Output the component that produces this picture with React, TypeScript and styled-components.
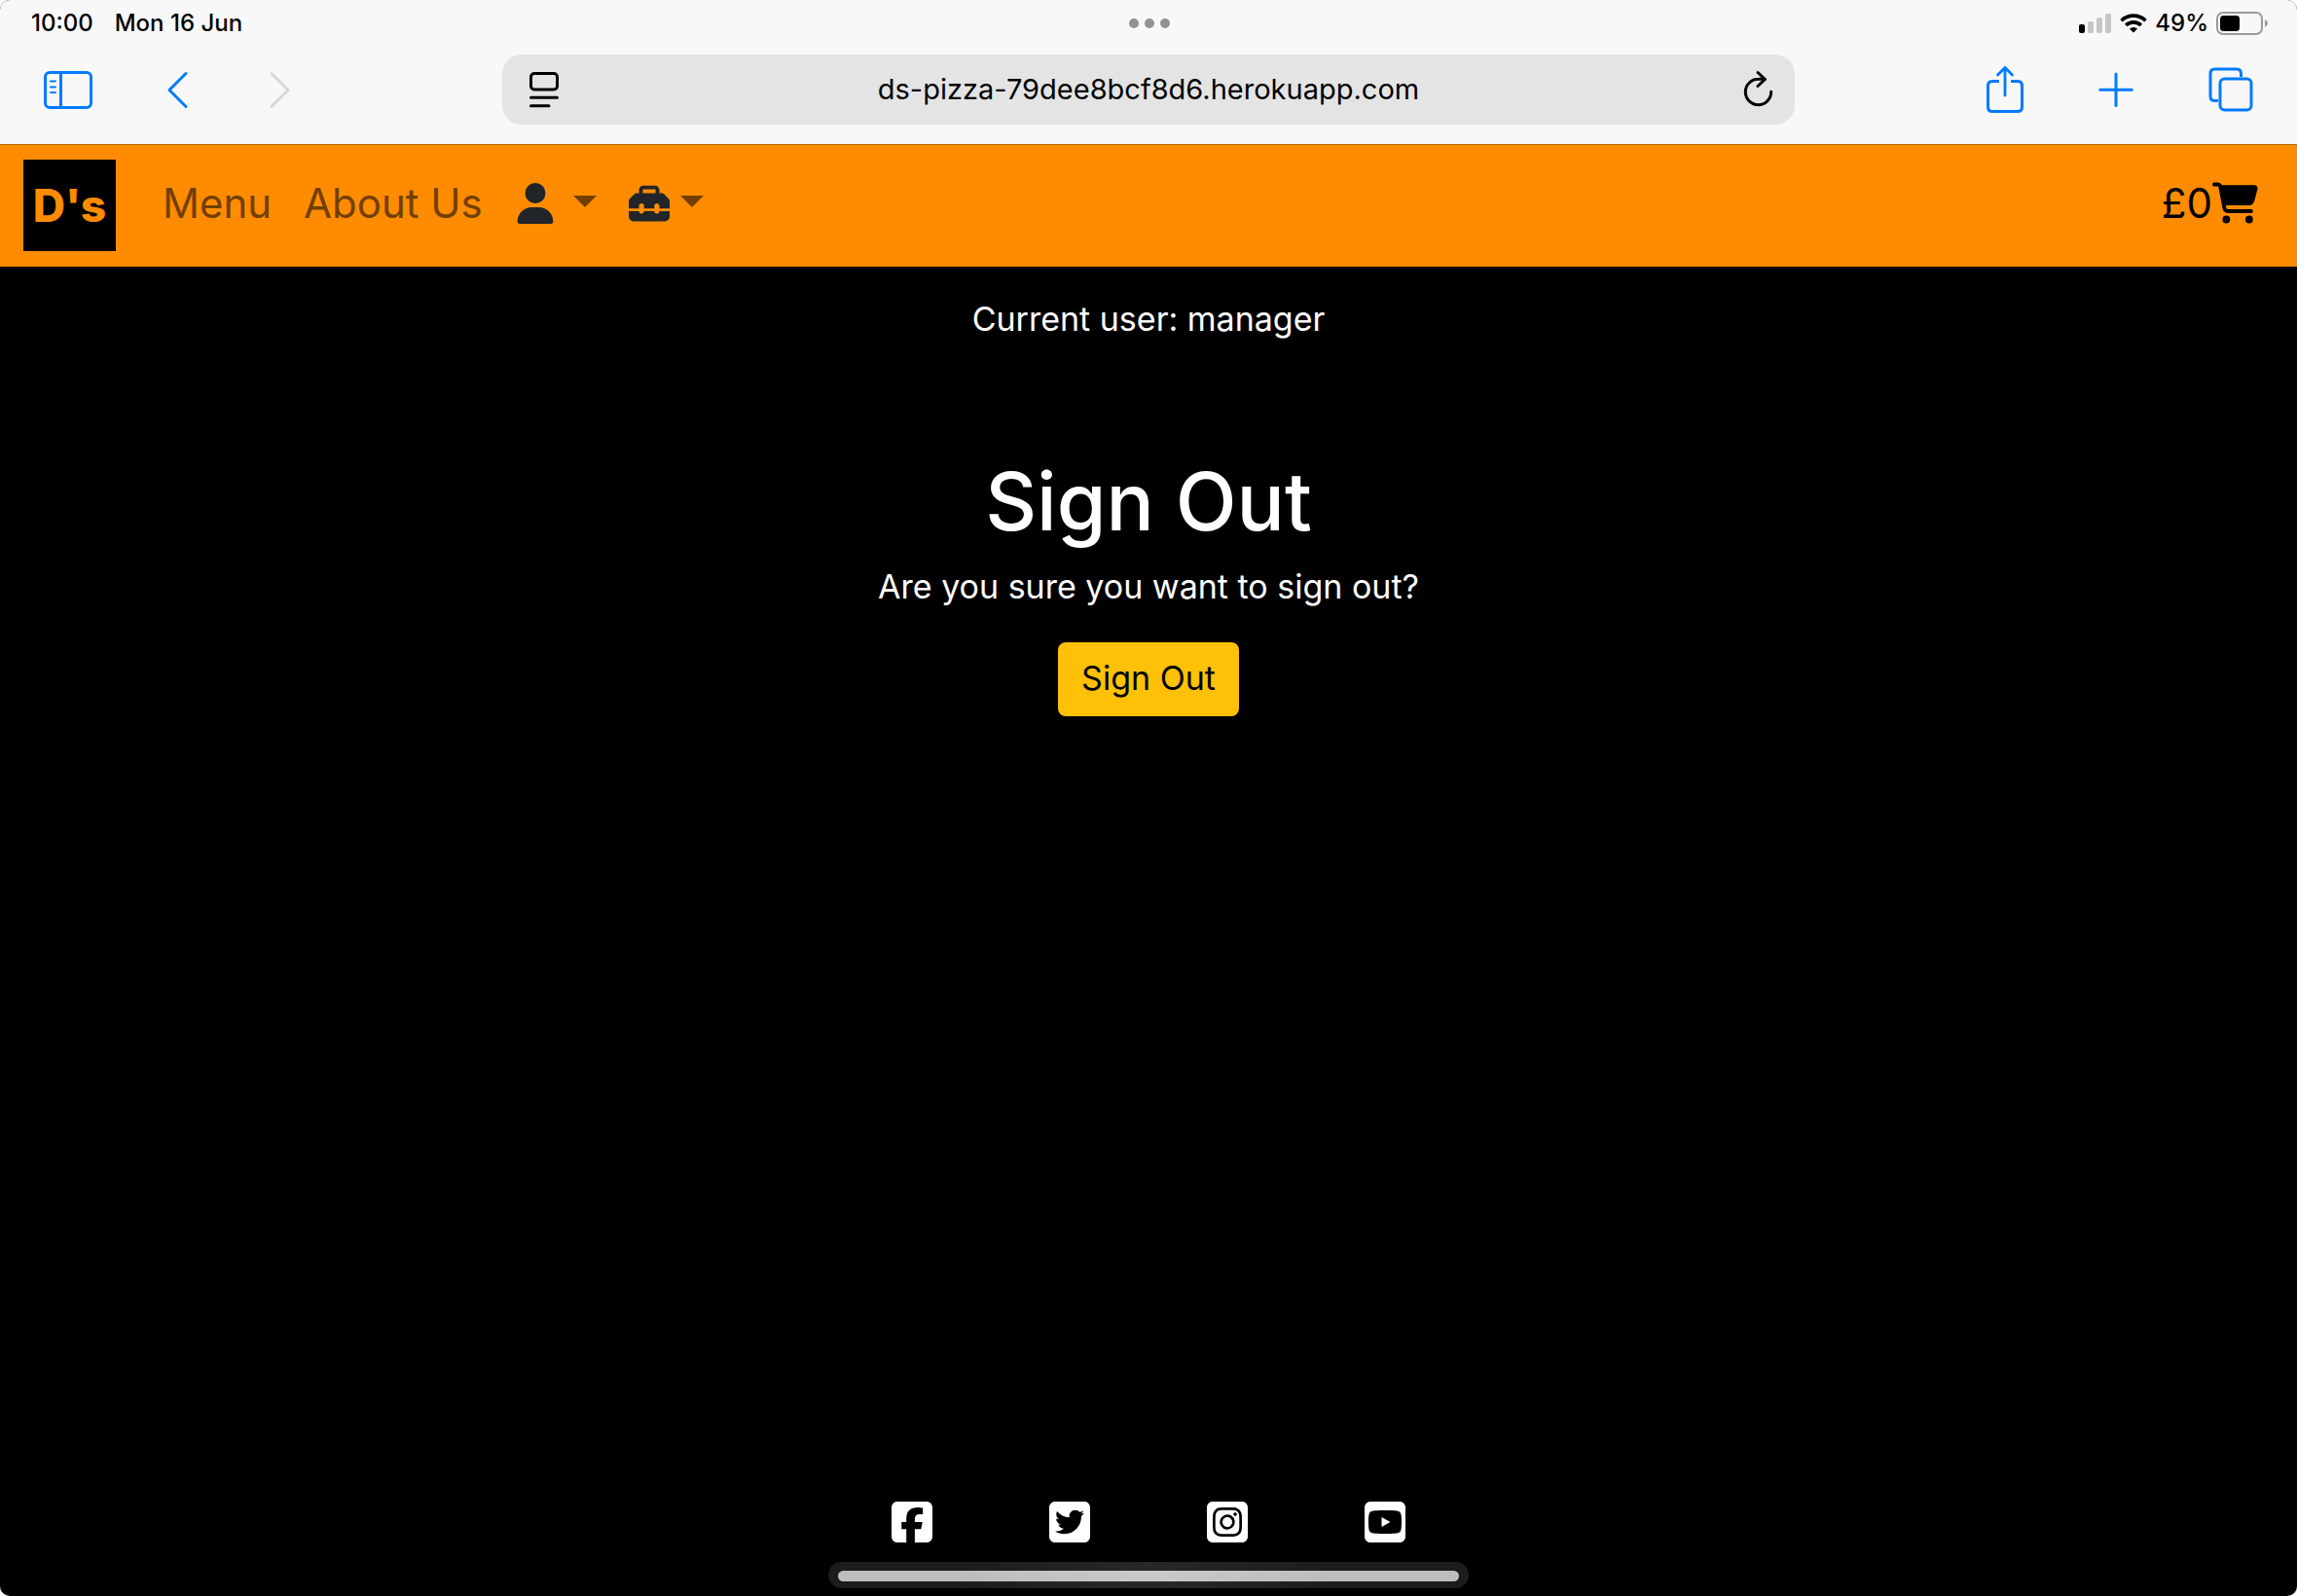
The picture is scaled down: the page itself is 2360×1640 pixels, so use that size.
import React from "react";
import styled, { createGlobalStyle } from "styled-components";
import {
  FaUser,
  FaToolbox,
  FaCartShopping,
  FaSquareFacebook,
  FaSquareTwitter,
  FaSquareInstagram,
  FaSquareYoutube,
} from "react-icons/fa6";

const sans = `Inter, "Liberation Sans", sans-serif`;

const GlobalStyle = createGlobalStyle`
  *, *::before, *::after { box-sizing: border-box; }
  html { background: #fff; }
  body { margin: 0; font-family: ${sans}; }
  button, input { font-family: inherit; color: inherit; }
`;

const Screen = styled.div`
  min-height: 100vh;
  display: flex;
  flex-direction: column;
  background: #000;
  color: #fff;
  border-radius: 10px;
  overflow: hidden;
`;

const Chrome = styled.header`
  background: #f8f8f8;
  color: #000;
  border-bottom: 1px solid #b36200;
`;

const StatusBar = styled.div`
  display: grid;
  grid-template-columns: 1fr auto 1fr;
  align-items: center;
  height: 48px;
  padding: 0 30px 0 32px;
  font-size: 24px;
  line-height: 32px;
  font-weight: 500;
`;

const StatusGroup = styled.div<{ $gap: number; $end?: boolean }>`
  display: flex;
  align-items: center;
  gap: ${(p) => p.$gap}px;
  justify-content: ${(p) => (p.$end ? "flex-end" : "flex-start")};
`;

const Multitask = styled.button`
  display: flex;
  gap: 6px;
  padding: 0;
  border: 0;
  background: none;
`;

const Dot = styled.span`
  width: 10px;
  height: 10px;
  border-radius: 50%;
  background: #929292;
`;

const Toolbar = styled.div`
  display: grid;
  grid-template-columns: 1fr minmax(0, 1328px) 1fr;
  align-items: center;
  height: 100px;
  padding: 0 44px 12px;
`;

const ToolGroup = styled.div<{ $end?: boolean }>`
  display: flex;
  align-items: center;
  gap: 75px;
  justify-content: ${(p) => (p.$end ? "flex-end" : "flex-start")};
`;

const IconButton = styled.button`
  display: flex;
  padding: 0;
  border: 0;
  background: none;
  color: #007aff;

  &:disabled {
    color: #d6d6d6;
  }
`;

const AddressBar = styled.form`
  display: flex;
  align-items: center;
  height: 72px;
  padding: 0 20px 0 26px;
  border-radius: 20px;
  background: #e4e4e4;

  ${IconButton} {
    color: #000;
  }
`;

const AddressInput = styled.input`
  flex: 1;
  min-width: 0;
  padding: 0 6px 0 0;
  border: 0;
  background: none;
  font-size: 29px;
  line-height: 40px;
  text-align: center;
`;

const NavBar = styled.nav`
  display: flex;
  align-items: center;
  height: 125px;
  padding: 0 40px 2px 24px;
  background: #ff8c00;
  font-size: 42px;
  line-height: 60px;
`;

const Brand = styled.a`
  display: flex;
  align-items: center;
  justify-content: center;
  width: 95px;
  height: 94px;
  margin-right: 48px;
  background: #000;
  color: #ff8c00;
  font-size: 46px;
  font-weight: 800;
  text-decoration: none;
`;

const NavList = styled.ul`
  display: flex;
  align-items: center;
  gap: 33px;
  margin: 0;
  padding: 0 0 4px;
  list-style: none;
`;

const NavLink = styled.a`
  color: #733f00;
  text-decoration: none;
`;

const NavMenu = styled.button<{ $gap: number }>`
  display: flex;
  align-items: center;
  gap: ${(p) => p.$gap}px;
  padding: 0;
  border: 0;
  background: none;
  color: #212529;
  font-size: 42px;
`;

const Caret = styled.span`
  margin-bottom: 4px;
  border: 12px solid transparent;
  border-top-color: #733f00;
  border-bottom: 0;
`;

const Cart = styled.a`
  display: flex;
  align-items: center;
  margin-left: auto;
  padding-bottom: 4px;
  color: #000;
  text-decoration: none;

  svg {
    font-size: 47px;
  }
`;

const Main = styled.main`
  flex: 1;
  display: flex;
  flex-direction: column;
  align-items: center;
  padding-top: 30px;
  font-size: 34px;
  line-height: 48px;
  text-align: center;
`;

const Paragraph = styled.p`
  margin: 0;
`;

const Title = styled.h1`
  margin: 116px 0 15px;
  font-size: 82px;
  line-height: 96px;
  font-weight: 500;
`;

const SubmitButton = styled.button`
  height: 76px;
  margin-top: 33px;
  padding: 0 24px 4px;
  border: 0;
  border-radius: 8px;
  background: #ffc107;
  color: #000;
  font-size: 34px;
`;

const Footer = styled.footer`
  display: flex;
  flex-direction: column;
  align-items: center;
  gap: 17px;
  padding-bottom: 8px;
`;

const SocialList = styled.ul`
  display: flex;
  gap: 120px;
  margin: 0;
  padding: 0;
  list-style: none;
`;

const SocialLink = styled.a`
  display: flex;
  color: #fff;
  font-size: 48px;

  svg {
    width: 42px;
  }
`;

const HomeIndicator = styled.div`
  width: 658px;
  max-width: 100%;
  padding: 9px 10px 7px;
  border-radius: 14px;
  background: linear-gradient(90deg, #1c1c1c 20%, #282828 50%, #1c1c1c 80%);
`;

const HomeBar = styled.div`
  height: 11px;
  border-radius: 6px;
  background: linear-gradient(90deg, #bdbdbd 20%, #c9c9c9 50%, #bdbdbd 80%);
`;

type DrawingProps = { w: number; h: number; children: React.ReactNode };

const Drawing = ({ w, h, children }: DrawingProps) => (
  <svg
    width={w}
    height={h}
    viewBox={`0 0 ${w} ${h}`}
    fill="none"
    stroke="currentColor"
    strokeWidth={3}
    strokeLinecap="round"
    strokeLinejoin="round"
    aria-hidden="true"
  >
    {children}
  </svg>
);

const SidebarIcon = () => (
  <Drawing w={52} h={48}>
    <rect x="2.5" y="6.5" width="47" height="36" rx="4.5" />
    <path d="M18.5 6.5v36" strokeLinecap="butt" />
    <path d="M8 15.5h5M8 21.5h5M8 27h5" strokeWidth="2" />
  </Drawing>
);

const BackIcon = () => (
  <Drawing w={30} h={48}>
    <path d="M20 7.5 3 24.5l17 17" />
  </Drawing>
);

const ForwardIcon = () => (
  <Drawing w={24} h={48}>
    <path d="m3 7.5 17 17-17 17" />
  </Drawing>
);

const ReaderIcon = () => (
  <Drawing w={34} h={40}>
    <rect x="3.5" y="3.5" width="27" height="16.5" rx="3.5" />
    <path d="M3.5 28.3h27M3.5 36.8h18.5" />
  </Drawing>
);

const ReloadIcon = () => (
  <Drawing w={34} h={40}>
    <path d="M29.700 22.300A13.200 13.200 0 1 1 16.500 9.300Q20 9 23 9.500" />
    <path d="M16 2.500 23.500 9.500 16 16.500" />
  </Drawing>
);

const ShareIcon = () => (
  <Drawing w={40} h={52}>
    <path d="M14 17.500H7q-4.500 0-4.500 4.500v22q0 4.500 4.500 4.500h26q4.500 0 4.500-4.500V22q0-4.500-4.500-4.500h-7" strokeLinecap="butt" />
    <path d="M20 32V3.500M12.500 11 20 3.500l7.500 7.500" strokeWidth="2.800" />
  </Drawing>
);

const PlusIcon = () => (
  <Drawing w={38} h={52}>
    <path d="M19 10v32.500M2.800 26.300h32.500" />
  </Drawing>
);

const TabsIcon = () => (
  <Drawing w={48} h={52}>
    <rect x="13" y="15" width="32" height="32" rx="4.500" />
    <path d="M11 37.500H7.500Q3 37.500 3 33V9.500Q3 5 7.500 5H30q4.500 0 4.500 4.500V13" strokeLinecap="butt" />
  </Drawing>
);

const SignalIcon = () => (
  <svg width="34" height="20" viewBox="0 0 34 20" aria-hidden="true">
    <rect x="0" y="11" width="6" height="9" rx="2" fill="#000" />
    <rect x="9" y="8" width="6" height="12" rx="2" fill="#c6c6c6" />
    <rect x="18" y="4" width="6" height="16" rx="2" fill="#c6c6c6" />
    <rect x="27" y="0" width="6" height="20" rx="2" fill="#c6c6c6" />
  </svg>
);

const WifiIcon = () => (
  <svg width="28" height="20" viewBox="0 0 28 20" fill="none" stroke="#000" strokeWidth="3.600" aria-hidden="true">
    <path d="M1.500 7.200a18 18 0 0 1 25 0" />
    <path d="M6.200 12a11.200 11.200 0 0 1 15.600 0" />
    <path d="M14 19.600 10 15.700a5.800 5.800 0 0 1 8 0Z" fill="#000" stroke="none" />
  </svg>
);

const BatteryIcon = () => (
  <svg width="53" height="24" viewBox="0 0 53 24" aria-hidden="true">
    <rect x="1" y="1" width="46" height="22" rx="6" fill="none" stroke="#9b9b9b" strokeWidth="2" />
    <rect x="4" y="4" width="20" height="16" rx="3.500" fill="#000" />
    <path d="M50 8q3 1.500 3 4t-3 4Z" fill="#9b9b9b" />
  </svg>
);

const socials = [
  { label: "Facebook", Icon: FaSquareFacebook },
  { label: "Twitter", Icon: FaSquareTwitter },
  { label: "Instagram", Icon: FaSquareInstagram },
  { label: "YouTube", Icon: FaSquareYoutube },
];

export default function App() {
  return (
    <>
      <GlobalStyle />
      <Screen>
        <Chrome>
          <StatusBar>
            <StatusGroup $gap={22}>
              <span>10:00</span>
              <span>Mon 16 Jun</span>
            </StatusGroup>
            <Multitask type="button" aria-label="Multitasking">
              <Dot />
              <Dot />
              <Dot />
            </Multitask>
            <StatusGroup $gap={8} $end>
              <SignalIcon />
              <WifiIcon />
              <span>49%</span>
              <BatteryIcon />
            </StatusGroup>
          </StatusBar>
          <Toolbar>
            <ToolGroup>
              <IconButton type="button" aria-label="Show sidebar">
                <SidebarIcon />
              </IconButton>
              <IconButton type="button" aria-label="Back">
                <BackIcon />
              </IconButton>
              <IconButton type="button" aria-label="Forward" disabled>
                <ForwardIcon />
              </IconButton>
            </ToolGroup>
            <AddressBar onSubmit={(e) => e.preventDefault()}>
              <IconButton type="button" aria-label="Page settings">
                <ReaderIcon />
              </IconButton>
              <AddressInput
                type="text"
                aria-label="Address"
                defaultValue="ds-pizza-79dee8bcf8d6.herokuapp.com"
              />
              <IconButton type="submit" aria-label="Reload">
                <ReloadIcon />
              </IconButton>
            </AddressBar>
            <ToolGroup $end>
              <IconButton type="button" aria-label="Share">
                <ShareIcon />
              </IconButton>
              <IconButton type="button" aria-label="New tab">
                <PlusIcon />
              </IconButton>
              <IconButton type="button" aria-label="Show tabs">
                <TabsIcon />
              </IconButton>
            </ToolGroup>
          </Toolbar>
        </Chrome>

        <NavBar>
          <Brand href="#home">D's</Brand>
          <NavList>
            <li>
              <NavLink href="#menu">Menu</NavLink>
            </li>
            <li>
              <NavLink href="#about">About Us</NavLink>
            </li>
            <li>
              <NavMenu type="button" $gap={18} aria-label="Account">
                <FaUser />
                <Caret />
              </NavMenu>
            </li>
            <li>
              <NavMenu type="button" $gap={11} aria-label="Management">
                <FaToolbox />
                <Caret />
              </NavMenu>
            </li>
          </NavList>
          <Cart href="#cart">
            <span>£0</span>
            <FaCartShopping aria-label="Cart" />
          </Cart>
        </NavBar>

        <Main>
          <Paragraph>Current user: manager</Paragraph>
          <Title>Sign Out</Title>
          <Paragraph>Are you sure you want to sign out?</Paragraph>
          <SubmitButton type="submit">Sign Out</SubmitButton>
        </Main>

        <Footer>
          <SocialList>
            {socials.map(({ label, Icon }) => (
              <li key={label}>
                <SocialLink href={`#${label.toLowerCase()}`} aria-label={label}>
                  <Icon />
                </SocialLink>
              </li>
            ))}
          </SocialList>
          <HomeIndicator>
            <HomeBar />
          </HomeIndicator>
        </Footer>
      </Screen>
    </>
  );
}
